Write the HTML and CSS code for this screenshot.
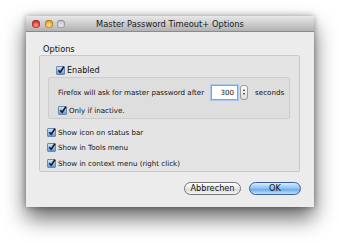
FILE: index.html
```html
<!DOCTYPE html>
<html>
<head>
<meta charset="utf-8">
<link rel="stylesheet" href="styles.css">
</head>
<body>
<div class="window">
  <div class="titlebar">
    <div class="lights">
      <span class="light red"></span>
      <span class="light yellow"></span>
      <span class="light gray"></span>
    </div>
    <div class="title">Master Password Timeout+ Options</div>
  </div>
  <div class="content">
    <div class="legend">Options</div>
    <div class="group">
      <label class="row enabled"><span class="cb"><svg viewBox="0 0 8 8"><path d="M1.3 4.2 L3.2 6.3 L6.9 0.8" /></svg></span>Enabled</label>
      <div class="inner">
        <div class="line">
          <span>Firefox will ask for master password after</span>
          <span class="field">300</span>
          <span class="stepper"><i class="up"></i><i class="down"></i></span>
          <span>seconds</span>
        </div>
        <label class="row"><span class="cb"><svg viewBox="0 0 8 8"><path d="M1.3 4.2 L3.2 6.3 L6.9 0.8" /></svg></span>Only if inactive.</label>
      </div>
      <div class="list">
        <label class="row"><span class="cb"><svg viewBox="0 0 8 8"><path d="M1.3 4.2 L3.2 6.3 L6.9 0.8" /></svg></span>Show icon on status bar</label>
        <label class="row"><span class="cb"><svg viewBox="0 0 8 8"><path d="M1.3 4.2 L3.2 6.3 L6.9 0.8" /></svg></span>Show in Tools menu</label>
        <label class="row"><span class="cb"><svg viewBox="0 0 8 8"><path d="M1.3 4.2 L3.2 6.3 L6.9 0.8" /></svg></span>Show in context menu (right click)</label>
      </div>
    </div>
    <div class="buttons">
      <span class="btn">Abbrechen</span>
      <span class="btn ok">OK</span>
    </div>
  </div>
</div>
</body>
</html>
```
FILE: styles.css
```css
html, body {
  margin: 0;
  padding: 0;
  background: #ffffff;
}
body {
  padding: 16px 0 0 26px;
  height: 243px;
  box-sizing: border-box;
  font-family: "DejaVu Sans", sans-serif;
  font-size: 7.1px;
  color: #111;
  white-space: nowrap;
}
.window {
  width: 288px;
  height: 191px;
  background: #ececec;
  box-shadow: 0 11px 20px rgba(0,0,0,0.6), 0 0 6px rgba(0,0,0,0.35);
  display: flex;
  flex-direction: column;
}
.titlebar {
  height: 15px;
  background: linear-gradient(#e8e8e8, #b2b2b2);
  border-bottom: 1px solid #8a8a8a;
  position: relative;
  display: flex;
  align-items: center;
  justify-content: center;
}
.lights {
  position: absolute;
  left: 6px;
  top: 4px;
  display: flex;
  gap: 4.5px;
}
.light {
  width: 8px;
  height: 8px;
  border-radius: 50%;
  box-shadow: inset 0 0 0 0.5px rgba(0,0,0,0.35);
}
.red { background: radial-gradient(circle at 50% 65%, #ff9a90, #d8342b 60%, #a8201a); }
.yellow { background: radial-gradient(circle at 50% 65%, #ffe39a, #e8a21e 60%, #b87a10); }
.gray { background: radial-gradient(circle at 50% 65%, #eaeaea, #c4c4c4 60%, #a4a4a4); }
.title {
  font-size: 8.3px;
  color: #1a1a1a;
}
.content {
  padding: 11px 14px 0 13px;
  display: flex;
  flex-direction: column;
}
.legend {
  font-size: 8.2px;
  height: 12px;
  padding-left: 4px;
  line-height: 12px;
}
.group {
  border: 1px solid #c9c9c9;
  background: #e4e4e4;
  border-radius: 2px;
  padding: 9px 9px 3px 8px;
  height: 117px;
  box-sizing: border-box;
  display: flex;
  flex-direction: column;
}
.row {
  display: flex;
  align-items: center;
  height: 10px;
}
.cb {
  width: 7px;
  height: 7px;
  border: 1px solid #6c89b3;
  border-radius: 1px;
  background: linear-gradient(#cfe2f7, #5d9be0);
  margin-right: 2px;
  position: relative;
  flex: none;
}
.cb svg {
  position: absolute;
  left: 0;
  top: -1px;
  width: 8px;
  height: 8px;
  overflow: visible;
}
.cb path {
  fill: none;
  stroke: #1a1a1a;
  stroke-width: 1.6;
}
.enabled {
  font-size: 8.1px;
  margin-left: 8px;
}
.inner {
  margin-top: 2px;
  border: 1px solid #cdcdcd;
  background: #dedede;
  border-radius: 2px;
  height: 42px;
  box-sizing: border-box;
  padding: 6px 0 0 9px;
  display: flex;
  flex-direction: column;
  gap: 5px;
}
.line {
  display: flex;
  align-items: center;
  height: 16px;
}
.field {
  margin-left: 7px;
  width: 27px;
  height: 15px;
  box-sizing: border-box;
  border: 1px solid #7fa6d6;
  box-shadow: 0 0 0 1px #a9c8ee;
  background: #fff;
  text-align: right;
  padding-right: 3px;
  line-height: 13px;
}
.stepper {
  width: 8px;
  height: 15px;
  margin-left: 2px;
  margin-right: 7px;
  border: 1px solid #9a9a9a;
  border-radius: 3px;
  background: linear-gradient(#fcfcfc, #dcdcdc);
  display: flex;
  flex-direction: column;
  align-items: center;
  justify-content: space-around;
  padding: 2px 0;
  box-sizing: border-box;
}
.stepper i {
  width: 0;
  height: 0;
  border-left: 1.5px solid transparent;
  border-right: 1.5px solid transparent;
}
.stepper .up { border-bottom: 2px solid #222; }
.stepper .down { border-top: 2px solid #222; }
.list {
  margin-top: 8px;
  margin-left: -1px;
  display: flex;
  flex-direction: column;
  gap: 5.5px;
}
.buttons {
  margin-top: 10px;
  margin-right: -1px;
  display: flex;
  justify-content: flex-end;
  gap: 8px;
}
.btn {
  height: 13px;
  box-sizing: border-box;
  border: 1px solid #777;
  border-radius: 7px;
  background: linear-gradient(#ffffff, #e6e6e6 50%, #d6d6d6 51%, #f4f4f4);
  font-size: 8.2px;
  line-height: 11px;
  width: 57px;
  text-align: center;
}
.ok {
  width: 52px;
  border-color: #3d5f98;
  background: linear-gradient(#d6ebfd, #8cc0f2 50%, #5ea3ea 51%, #bde0fb);
}
```
